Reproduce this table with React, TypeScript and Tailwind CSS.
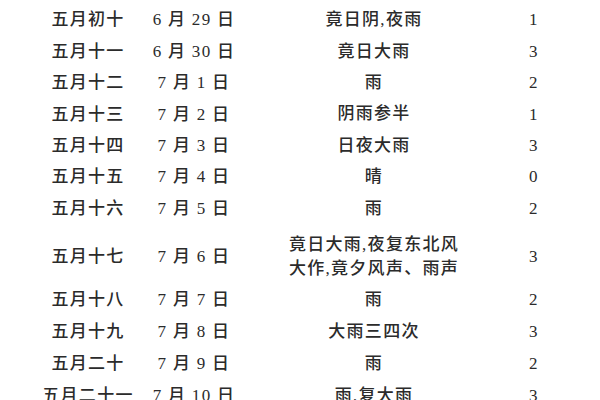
const rows: [string, string, string[], string][] = [
  ["五月初十", "6 月 29 日", ["竟日阴,夜雨"], "1"],
  ["五月十一", "6 月 30 日", ["竟日大雨"], "3"],
  ["五月十二", "7 月 1 日", ["雨"], "2"],
  ["五月十三", "7 月 2 日", ["阴雨参半"], "1"],
  ["五月十四", "7 月 3 日", ["日夜大雨"], "3"],
  ["五月十五", "7 月 4 日", ["晴"], "0"],
  ["五月十六", "7 月 5 日", ["雨"], "2"],
  ["五月十七", "7 月 6 日", ["竟日大雨,夜复东北风", "大作,竟夕风声、雨声"], "3"],
  ["五月十八", "7 月 7 日", ["雨"], "2"],
  ["五月十九", "7 月 8 日", ["大雨三四次"], "3"],
  ["五月二十", "7 月 9 日", ["雨"], "2"],
  ["五月二十一", "7 月 10 日", ["雨,复大雨"], "3"],
];

export default function App() {
  return (
    <div
      className="w-[600px] h-[400px] overflow-hidden bg-white pt-[4.5px] pl-[28px] text-[17px] font-medium tracking-[1.3px] text-[#2b2b2b]"
      style={{ fontFamily: '"Liberation Serif", "Noto Sans CJK SC", serif' }}
    >
      {rows.map(([lunar, solar, weather, level], i) => {
        const double = weather.length > 1;
        const height = double ? "h-[60px] pt-[5px]" : i < 7 ? "h-[31.4px]" : "h-[32px]";
        return (
          <div key={i} className={`grid grid-cols-[120px_92px_268px_52px] items-center ${height}`}>
            <div className="text-center whitespace-nowrap">{lunar}</div>
            <div className="text-center whitespace-pre">{solar}</div>
            <div className="flex flex-col items-center leading-[24px] whitespace-nowrap">
              {weather.map((w) => (
                <span key={w}>{w}</span>
              ))}
            </div>
            <div className="text-center">{level}</div>
          </div>
        );
      })}
    </div>
  );
}
